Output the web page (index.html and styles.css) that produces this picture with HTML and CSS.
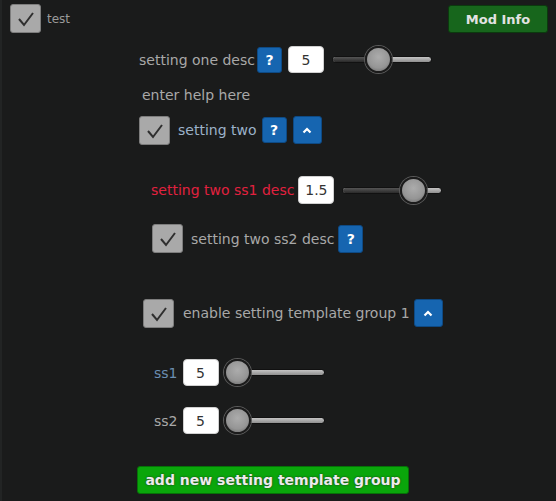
FILE: index.html
```html
<!DOCTYPE html>
<html>
<head>
<meta charset="utf-8">
<link rel="stylesheet" href="styles.css">
</head>
<body>
<div class="page">
  <div class="header">
    <div class="head-left">
      <span class="check"><svg viewBox="0 0 31 29" width="31" height="29"><polyline points="9,15 14,21 23,9" fill="none" stroke="#2f2f2f" stroke-width="2"/></svg></span>
      <span class="test">test</span>
    </div>
    <button class="mod-info">Mod Info</button>
  </div>

  <div class="row r1">
    <span class="label">setting one desc</span>
    <span class="btn help">?</span>
    <span class="num">5</span>
    <div class="slider w100"><div class="fill" style="width:45px"></div><div class="thumb" style="left:32px"></div></div>
  </div>

  <div class="helptext">enter help here</div>

  <div class="row r2">
    <span class="check"><svg viewBox="0 0 31 29" width="31" height="29"><polyline points="9,15 14,21 23,9" fill="none" stroke="#2f2f2f" stroke-width="2"/></svg></span>
    <span class="label blue">setting two</span>
    <span class="btn help">?</span>
    <span class="btn caret"><svg viewBox="0 0 10 7" width="10" height="7"><polyline points="1.5,5.5 5,2 8.5,5.5" fill="none" stroke="#fff" stroke-width="2.2"/></svg></span>
  </div>

  <div class="row r3">
    <span class="label red">setting two ss1 desc</span>
    <span class="num">1.5</span>
    <div class="slider w100"><div class="fill" style="width:70px"></div><div class="thumb" style="left:57px"></div></div>
  </div>

  <div class="row r4">
    <span class="check"><svg viewBox="0 0 31 29" width="31" height="29"><polyline points="9,15 14,21 23,9" fill="none" stroke="#2f2f2f" stroke-width="2"/></svg></span>
    <span class="label">setting two ss2 desc</span>
    <span class="btn help">?</span>
  </div>

  <div class="row r5">
    <span class="check"><svg viewBox="0 0 31 29" width="31" height="29"><polyline points="9,15 14,21 23,9" fill="none" stroke="#2f2f2f" stroke-width="2"/></svg></span>
    <span class="label">enable setting template group 1</span>
    <span class="btn caret"><svg viewBox="0 0 10 7" width="10" height="7"><polyline points="1.5,5.5 5,2 8.5,5.5" fill="none" stroke="#fff" stroke-width="2.2"/></svg></span>
  </div>

  <div class="row r6">
    <span class="label steel">ss1</span>
    <span class="num">5</span>
    <div class="slider w102"><div class="fill" style="width:0"></div><div class="thumb" style="left:0"></div></div>
  </div>

  <div class="row r7">
    <span class="label">ss2</span>
    <span class="num">5</span>
    <div class="slider w102"><div class="fill" style="width:0"></div><div class="thumb" style="left:0"></div></div>
  </div>

  <button class="add">add new setting template group</button>
</div>
</body>
</html>
```

FILE: styles.css
```css
html, body {
  margin: 0;
  padding: 0;
  background: #1a1b1b;
}
body {
  font-family: "DejaVu Sans", Verdana, sans-serif;
  width: 556px;
  height: 501px;
  overflow: hidden;
  box-sizing: border-box;
  border-left: 2px solid #222424;
}
.page {
  display: flex;
  flex-direction: column;
  align-items: flex-start;
}
.header {
  display: flex;
  justify-content: space-between;
  align-items: flex-start;
  width: 100%;
  box-sizing: border-box;
  padding: 4px 8px 0 8px;
  height: 34px;
}
.head-left {
  display: flex;
  align-items: center;
  gap: 6px;
}
.test {
  color: #9a9a9a;
  font-size: 12px;
}
.check {
  display: block;
  width: 31px;
  height: 29px;
  box-sizing: border-box;
  background: #a9a9a9;
  border: 1px solid #7d7d7d;
  border-radius: 3px;
  flex: none;
}
.check svg { display: block; margin: -1px; }
.mod-info {
  margin-top: 1px;
  width: 100px;
  height: 28px;
  background: #17661c;
  border: 1px solid #0b3a0e;
  border-radius: 3px;
  color: #e2e2e2;
  font-family: "DejaVu Sans", Verdana, sans-serif;
  font-weight: bold;
  font-size: 13px;
  padding: 0;
}
.row {
  display: flex;
  align-items: center;
}
.label {
  font-size: 14px;
  color: #a8a8a8;
  white-space: nowrap;
}
.label.blue { color: #9cb2c9; }
.label.red { color: #e2213f; }
.label.steel { color: #6b8eb2; }
.btn {
  display: flex;
  align-items: center;
  justify-content: center;
  box-sizing: border-box;
  background: #1665b0;
  border: 1px solid #0e4a84;
  border-radius: 3px;
  color: #fff;
  font-weight: bold;
  font-size: 14px;
  height: 26px;
  flex: none;
}
.btn.help { width: 25px; }
.btn.caret { width: 29px; height: 28px; }
.num {
  display: flex;
  align-items: center;
  justify-content: center;
  box-sizing: border-box;
  width: 36px;
  height: 27px;
  background: #fff;
  border: 1px solid #d0d0d0;
  border-radius: 4px;
  color: #333;
  font-size: 14px;
  flex: none;
}
.slider {
  position: relative;
  height: 7px;
  box-sizing: border-box;
  border: 1px solid #111;
  border-radius: 4px;
  background: linear-gradient(#c4c4c4, #8f8f8f);
  flex: none;
}
.slider.w100 { width: 100px; }
.slider.w102 { width: 102px; }
.fill {
  height: 100%;
  border-radius: 3px 0 0 3px;
  background: linear-gradient(#555, #2a2a2a);
}
.thumb {
  position: absolute;
  top: -11px;
  width: 27px;
  height: 27px;
  box-sizing: border-box;
  border-radius: 50%;
  border: 2px solid #1b1b1b;
  background: radial-gradient(circle at 50% 40%, #acacac 0%, #959595 60%, #727272 85%, #a0a0a0 100%);
  box-shadow: 0 0 0 1px #5a5a5a;
}
.r1 { margin-top: 12px; margin-left: 137px; }
.r1 .label { margin-right: 2px; }
.r1 .help { margin-right: 6px; }
.r1 .num { margin-right: 8px; }
.helptext {
  margin-top: 14px;
  margin-left: 140px;
  font-size: 14px;
  line-height: 16px;
  color: #a8a8a8;
}
.r2 { margin-top: 12px; margin-left: 137px; height: 30px; }
.r2 .check { margin-right: 8px; }
.r2 .label { margin-right: 5px; }
.r2 .help { margin-right: 6px; }
.r3 { margin-top: 31px; margin-left: 149px; height: 28px; }
.r3 .label { margin-right: 4px; }
.r3 .num { margin-right: 8px; height: 28px; }
.r4 { margin-top: 20px; margin-left: 150px; height: 29px; }
.r4 .check { margin-right: 8px; }
.r4 .label { margin-right: 4px; }
.r4 .help { height: 28px; }
.r5 { margin-top: 45px; margin-left: 141px; height: 30px; }
.r5 .check { margin-right: 9px; }
.r5 .label { margin-right: 4px; }
.r6 { margin-top: 31px; margin-left: 152px; height: 27px; }
.r7 { margin-top: 21px; margin-left: 152px; height: 27px; }
.r6 .label, .r7 .label { margin-right: 5px; }
.r6 .num, .r7 .num { margin-right: 4px; }
.add {
  margin-top: 32px;
  margin-left: 135px;
  width: 272px;
  height: 28px;
  background: #0aa60b;
  border: 1px solid #067207;
  border-radius: 3px;
  color: #ececec;
  font-family: "DejaVu Sans", Verdana, sans-serif;
  font-weight: bold;
  font-size: 14px;
  padding: 0;
  text-shadow: 0 0 2px #222;
}
```
